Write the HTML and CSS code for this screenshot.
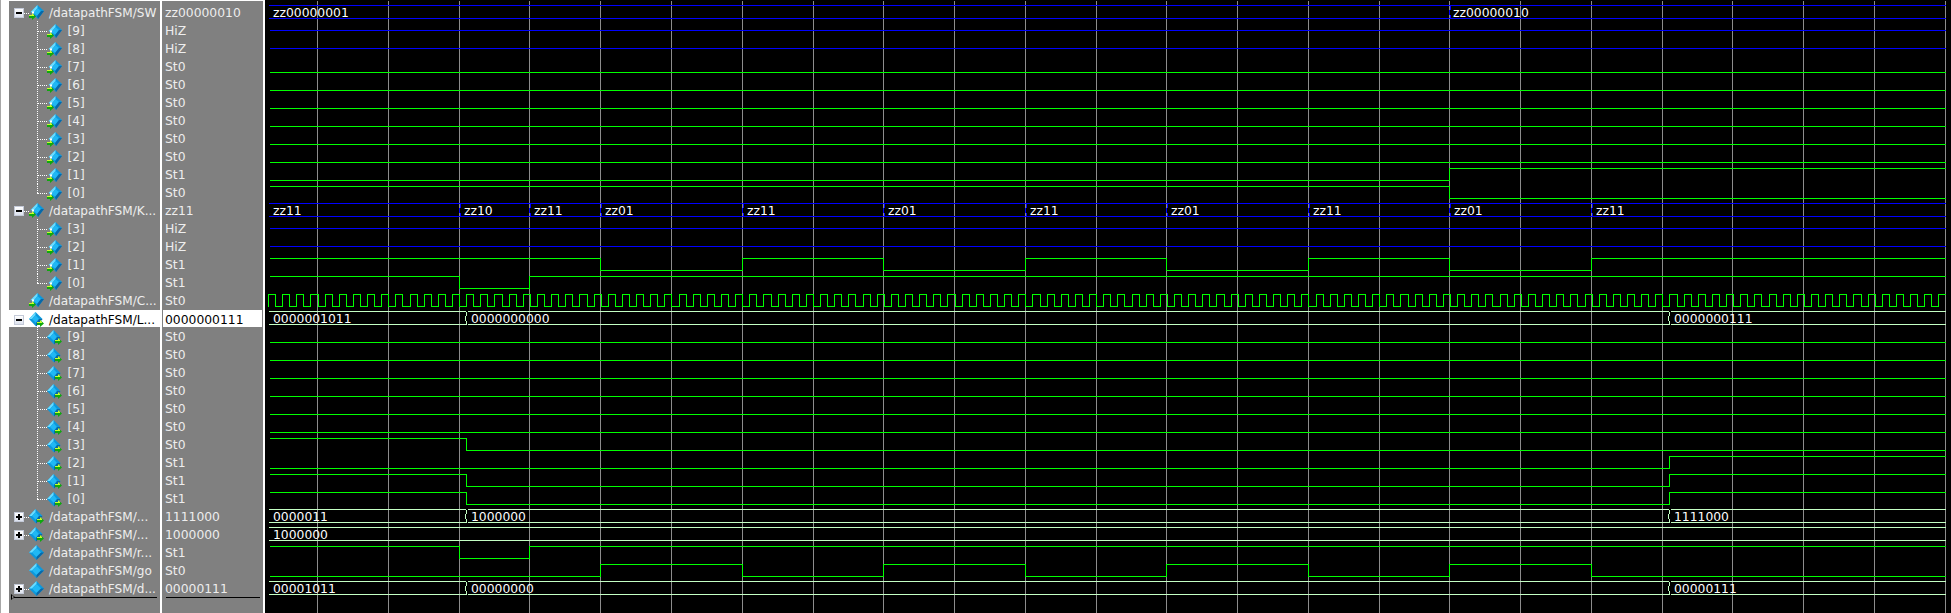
FILE: index.html
```html
<!DOCTYPE html>
<html lang="en">
<head>
  <meta charset="UTF-8">
  <title>Wave - datapathFSM</title>
  <link rel="stylesheet" href="styles.css">
</head>
<body>
  <!-- icon shapes, used by every row -->
  <svg class="defs" width="0" height="0">
    <symbol id="diamond" viewBox="0 0 15 15">
      <polygon points="7.5,0 15,7.5 7.5,15 0,7.5" fill="#0c98dc"/>
      <polygon points="7.5,0 0,7.5 3,7.5 7.5,3" fill="#6cdcff"/>
      <polygon points="7.5,3 12,7.5 7.5,12 3,7.5" fill="#20b8f4"/>
      <polygon points="15,7.5 7.5,15 7.5,12 12,7.5" fill="#0868a8"/>
    </symbol>
    <symbol id="ic-in" viewBox="0 0 15 15">
      <polygon points="8.5,0 15,6 9,14 2,7" fill="#0c98dc"/>
      <polygon points="8.5,0 1.5,7 4.5,8 8.5,3" fill="#6cdcff"/>
      <polygon points="8.5,3 12,6 8.5,11 4.5,8" fill="#20b8f4"/>
      <polygon points="15,6 9,14 8,11 12,6" fill="#0868a8"/>
      <polygon points="0,10 3,10 3,8 7,11.5 3,15 3,13 0,13" fill="#0ea80e"/>
      <polygon points="0,10 3,10 3,8 5,10 5,11 0,11" fill="#c8ff30"/>
      <rect x="3" y="6.5" width="2" height="2" fill="#fff"/>
    </symbol>
    <symbol id="ic-out" viewBox="0 0 15 15">
      <polygon points="6.5,0 13.5,7 7,14.5 0,7" fill="#0c98dc"/>
      <polygon points="6.5,0 0,7 3,7 6.5,3" fill="#6cdcff"/>
      <polygon points="6.5,3 10,7 7,11 3,7" fill="#20b8f4"/>
      <polygon points="13.5,7 7,14.5 7,11 10,7" fill="#0868a8"/>
      <polygon points="8,10 11,10 11,8 15,11.5 11,15 11,13 8,13" fill="#0ea80e"/>
      <polygon points="8,10 11,10 11,8 13,10 13,11 8,11" fill="#c8ff30"/>
    </symbol>
    <path id="xing" d="M1 0v4M0 4v5M1 9v4"/>
    <path id="clk5" d="M0 12V0h7.078v12h7.078v-12h7.078v12h7.078v-12h7.078v12h7.078v-12h7.078v12h7.078v-12h7.078v12h7.078"/>
    <g id="clk25">
      <use href="#clk5"/>
      <use href="#clk5" x="70.78"/>
      <use href="#clk5" x="141.56"/>
      <use href="#clk5" x="212.34"/>
      <use href="#clk5" x="283.12"/>
    </g>
  </svg>

  <div class="wave-window">
    <!-- signal names -->
    <div class="pane names">
      <div class="row"><i class="tog"></i><i class="stub"></i><svg class="icon"><use href="#ic-in"/></svg><span>/datapathFSM/SW</span></div>
      <div class="row child"><i class="branch"></i><svg class="icon"><use href="#ic-in"/></svg><span>[9]</span></div>
      <div class="row child"><i class="branch"></i><svg class="icon"><use href="#ic-in"/></svg><span>[8]</span></div>
      <div class="row child"><i class="branch"></i><svg class="icon"><use href="#ic-in"/></svg><span>[7]</span></div>
      <div class="row child"><i class="branch"></i><svg class="icon"><use href="#ic-in"/></svg><span>[6]</span></div>
      <div class="row child"><i class="branch"></i><svg class="icon"><use href="#ic-in"/></svg><span>[5]</span></div>
      <div class="row child"><i class="branch"></i><svg class="icon"><use href="#ic-in"/></svg><span>[4]</span></div>
      <div class="row child"><i class="branch"></i><svg class="icon"><use href="#ic-in"/></svg><span>[3]</span></div>
      <div class="row child"><i class="branch"></i><svg class="icon"><use href="#ic-in"/></svg><span>[2]</span></div>
      <div class="row child"><i class="branch"></i><svg class="icon"><use href="#ic-in"/></svg><span>[1]</span></div>
      <div class="row child last"><i class="branch"></i><svg class="icon"><use href="#ic-in"/></svg><span>[0]</span></div>

      <div class="row"><i class="tog"></i><i class="stub"></i><svg class="icon"><use href="#ic-in"/></svg><span>/datapathFSM/K...</span></div>
      <div class="row child"><i class="branch"></i><svg class="icon"><use href="#ic-in"/></svg><span>[3]</span></div>
      <div class="row child"><i class="branch"></i><svg class="icon"><use href="#ic-in"/></svg><span>[2]</span></div>
      <div class="row child"><i class="branch"></i><svg class="icon"><use href="#ic-in"/></svg><span>[1]</span></div>
      <div class="row child last"><i class="branch"></i><svg class="icon"><use href="#ic-in"/></svg><span>[0]</span></div>

      <div class="row leaf"><svg class="icon"><use href="#ic-in"/></svg><span>/datapathFSM/C...</span></div>

      <div class="row selected"><i class="tog"></i><i class="stub"></i><svg class="icon"><use href="#ic-out"/></svg><span>/datapathFSM/L...</span></div>
      <div class="row child"><i class="branch"></i><svg class="icon"><use href="#ic-out"/></svg><span>[9]</span></div>
      <div class="row child"><i class="branch"></i><svg class="icon"><use href="#ic-out"/></svg><span>[8]</span></div>
      <div class="row child"><i class="branch"></i><svg class="icon"><use href="#ic-out"/></svg><span>[7]</span></div>
      <div class="row child"><i class="branch"></i><svg class="icon"><use href="#ic-out"/></svg><span>[6]</span></div>
      <div class="row child"><i class="branch"></i><svg class="icon"><use href="#ic-out"/></svg><span>[5]</span></div>
      <div class="row child"><i class="branch"></i><svg class="icon"><use href="#ic-out"/></svg><span>[4]</span></div>
      <div class="row child"><i class="branch"></i><svg class="icon"><use href="#ic-out"/></svg><span>[3]</span></div>
      <div class="row child"><i class="branch"></i><svg class="icon"><use href="#ic-out"/></svg><span>[2]</span></div>
      <div class="row child"><i class="branch"></i><svg class="icon"><use href="#ic-out"/></svg><span>[1]</span></div>
      <div class="row child last"><i class="branch"></i><svg class="icon"><use href="#ic-out"/></svg><span>[0]</span></div>

      <div class="row"><i class="tog closed"></i><i class="stub"></i><svg class="icon"><use href="#ic-out"/></svg><span>/datapathFSM/...</span></div>
      <div class="row"><i class="tog closed"></i><i class="stub"></i><svg class="icon"><use href="#ic-out"/></svg><span>/datapathFSM/...</span></div>
      <div class="row leaf"><svg class="icon"><use href="#diamond"/></svg><span>/datapathFSM/r...</span></div>
      <div class="row leaf"><svg class="icon"><use href="#diamond"/></svg><span>/datapathFSM/go</span></div>
      <div class="row"><i class="tog closed"></i><i class="stub"></i><svg class="icon"><use href="#diamond"/></svg><span>/datapathFSM/d...</span></div>
      <div class="drop-line"></div>
    </div>

    <!-- values at the cursor -->
    <div class="pane values">
      <div class="row">zz00000010</div>
      <div class="row">HiZ</div>
      <div class="row">HiZ</div>
      <div class="row">St0</div>
      <div class="row">St0</div>
      <div class="row">St0</div>
      <div class="row">St0</div>
      <div class="row">St0</div>
      <div class="row">St0</div>
      <div class="row">St1</div>
      <div class="row">St0</div>
      <div class="row">zz11</div>
      <div class="row">HiZ</div>
      <div class="row">HiZ</div>
      <div class="row">St1</div>
      <div class="row">St1</div>
      <div class="row">St0</div>
      <div class="row selected">0000000111</div>
      <div class="row">St0</div>
      <div class="row">St0</div>
      <div class="row">St0</div>
      <div class="row">St0</div>
      <div class="row">St0</div>
      <div class="row">St0</div>
      <div class="row">St0</div>
      <div class="row">St1</div>
      <div class="row">St1</div>
      <div class="row">St1</div>
      <div class="row">1111000</div>
      <div class="row">1000000</div>
      <div class="row">St1</div>
      <div class="row">St0</div>
      <div class="row">00000111</div>
      <div class="drop-line"></div>
    </div>

    <!-- waveforms: coordinates are page pixels, hence the viewBox -->
    <svg class="waves" viewBox="265 0 1686 613" shape-rendering="crispEdges">
      <g transform="translate(0.5 0.5)">
        <path class="grid" d="M317 0V613M388 0V613M459 0V613M529 0V613M600 0V613M671 0V613M742 0V613M813 0V613M883 0V613M954 0V613M1025 0V613M1096 0V613M1166 0V613M1237 0V613M1308 0V613M1379 0V613M1449 0V613M1520 0V613M1591 0V613M1662 0V613M1732 0V613M1803 0V613M1874 0V613M1945 0V613"/>

        <!-- SW -->
        <g class="hiz">
          <path d="M268 5H1945M268 18H1945"/>
          <use href="#xing" x="1449" y="5"/>
          <path d="M269 30H1945M269 48H1945"/>
        </g>
        <path class="bit" d="M269 72H1945M269 90H1945M269 108H1945M269 126H1945M269 144H1945M269 162H1945"/>
        <path class="bit" d="M269 180H1449V168H1945"/>
        <path class="bit" d="M269 186H1449V198H1945"/>

        <!-- KEY -->
        <g class="hiz">
          <path d="M268 203H1945M268 216H1945"/>
          <use href="#xing" x="459" y="203"/>
          <use href="#xing" x="529" y="203"/>
          <use href="#xing" x="600" y="203"/>
          <use href="#xing" x="742" y="203"/>
          <use href="#xing" x="883" y="203"/>
          <use href="#xing" x="1025" y="203"/>
          <use href="#xing" x="1166" y="203"/>
          <use href="#xing" x="1308" y="203"/>
          <use href="#xing" x="1449" y="203"/>
          <use href="#xing" x="1591" y="203"/>
          <path d="M269 228H1945M269 246H1945"/>
        </g>
        <path class="bit" d="M269 258H600V270H742V258H883V270H1025V258H1166V270H1308V258H1449V270H1591V258H1945"/>
        <path class="bit" d="M269 276H459V288H529V276H1945"/>

        <!-- CLK, 118 and a bit periods -->
        <g class="bit" transform="translate(268 294)">
          <use href="#clk25"/>
          <use href="#clk25" x="353.9"/>
          <use href="#clk25" x="707.8"/>
          <use href="#clk25" x="1061.7"/>
          <use href="#clk5" x="1415.6"/>
          <use href="#clk5" x="1486.38"/>
          <use href="#clk5" x="1557.16"/>
          <path d="M1627.94 12V0h7.078v12h7.078v-12h7.078v12h7.078v-12h7.078v12h7.078v-12h6.6"/>
        </g>

        <!-- L -->
        <g class="bus">
          <path d="M268 311H465M467 311H1668M1670 311H1945M268 324H465M467 324H1668M1670 324H1945"/>
          <use href="#xing" x="465" y="311"/>
          <use href="#xing" x="1668" y="311"/>
        </g>
        <path class="bit" d="M269 342H1945M269 360H1945M269 378H1945M269 396H1945M269 414H1945M269 432H1945"/>
        <path class="bit" d="M269 438H466V450H1945"/>
        <path class="bit" d="M269 468H1669V456H1945"/>
        <path class="bit" d="M269 474H466V486H1669V474H1945"/>
        <path class="bit" d="M269 492H466V504H1669V492H1945"/>

        <g class="bus">
          <path d="M268 509H465M467 509H1668M1670 509H1945M268 522H465M467 522H1668M1670 522H1945"/>
          <use href="#xing" x="465" y="509"/>
          <use href="#xing" x="1668" y="509"/>
          <path d="M268 527H1945M268 540H1945"/>
        </g>
        <path class="bit" d="M269 546H459V558H529V546H1945"/>
        <path class="bit" d="M269 576H600V564H742V576H883V564H1025V576H1166V564H1308V576H1449V564H1591V576H1945"/>
        <g class="bus">
          <path d="M268 581H465M467 581H1668M1670 581H1945M268 594H465M467 594H1668M1670 594H1945"/>
          <use href="#xing" x="465" y="581"/>
          <use href="#xing" x="1668" y="581"/>
        </g>
      </g>

      <g class="bus-text">
        <text x="273" y="17">zz00000001</text>
        <text x="1453" y="17">zz00000010</text>
        <text x="273" y="215">zz11</text>
        <text x="464" y="215">zz10</text>
        <text x="534" y="215">zz11</text>
        <text x="605" y="215">zz01</text>
        <text x="747" y="215">zz11</text>
        <text x="888" y="215">zz01</text>
        <text x="1030" y="215">zz11</text>
        <text x="1171" y="215">zz01</text>
        <text x="1313" y="215">zz11</text>
        <text x="1454" y="215">zz01</text>
        <text x="1596" y="215">zz11</text>
        <text x="273" y="323">0000001011</text>
        <text x="471" y="323">0000000000</text>
        <text x="1674" y="323">0000000111</text>
        <text x="273" y="521">0000011</text>
        <text x="471" y="521">1000000</text>
        <text x="1674" y="521">1111000</text>
        <text x="273" y="539">1000000</text>
        <text x="273" y="593">00001011</text>
        <text x="471" y="593">00000000</text>
        <text x="1674" y="593">00000111</text>
      </g>
    </svg>
  </div>
</body>
</html>
```

FILE: styles.css
```css
html, body {
  margin: 0;
  height: 100%;
  overflow: hidden;
  background-color: #fff;
}

.defs {
  position: absolute;
}

.wave-window {
  display: flex;
  height: 613px;
  padding: 1px 0 0 8px;
  box-sizing: border-box;
  border-left: 1px solid #a8a8a8;
  font-family: "DejaVu Sans", sans-serif;
  font-size: 12.35px;
}

.pane {
  padding-top: 2px;
  background-color: #808080;
  color: #eee;
}

.names {
  width: 151px;
  margin-right: 2px;
  font-size: 12.1px;
}

.names span {
  padding-top: 2px;
}

.values {
  width: 101px;
  margin-right: 2px;
}

.row {
  display: flex;
  align-items: center;
  position: relative;
  box-sizing: border-box;
  height: 18px;
  white-space: nowrap;
}

.names .row {
  padding-left: 5px;
}

.names .row.leaf {
  padding-left: 20px;
}

.names .row.child {
  padding-left: 28px;
}

.values .row {
  padding: 2px 0 0 2px;
  margin-left: 1px;
  margin-right: 1px;
}

.row.selected {
  border-top: 1px solid #808080;
  background-color: #fff;
  background-clip: padding-box;
  color: #000;
}

.icon {
  flex: none;
  width: 15px;
  height: 15px;
  margin: 1px 5px 0 0;
}

.child .icon {
  margin-top: 2px;
  margin-right: 5.5px;
}

/* expand / collapse box */
.tog {
  position: relative;
  flex: none;
  box-sizing: border-box;
  width: 10px;
  height: 10px;
  margin-top: 2px;
  border: 1px solid #c4cad8;
  background: linear-gradient(#fff, #dde2ee);
}

.tog::before {
  content: "";
  position: absolute;
  left: 1px;
  top: 3px;
  width: 6px;
  height: 2px;
  background-color: #000;
}

.tog.closed::after {
  content: "";
  position: absolute;
  left: 3px;
  top: 1px;
  width: 2px;
  height: 6px;
  background-color: #000;
}

.stub {
  flex: none;
  width: 5px;
  margin-top: 2px;
  border-top: 1px dotted #fff;
}

.branch {
  position: relative;
  flex: none;
  width: 10px;
  margin-top: 2px;
  border-top: 1px dotted #fff;
}

.branch::before {
  content: "";
  position: absolute;
  left: 0;
  top: -11px;
  height: 19px;
  border-left: 1px dotted #fff;
}

.last .branch::before {
  height: 10px;
}

/* drop marker under the last row */
.drop-line {
  position: relative;
  height: 1px;
  margin: 0 3px 0 4px;
  background-color: #000;
}

.names .drop-line::before,
.names .drop-line::after {
  content: "";
  position: absolute;
  top: -3px;
  border-left: 4px solid #000;
  border-top: 3px solid transparent;
  border-bottom: 3px solid transparent;
}

.names .drop-line::before {
  left: -2px;
}

.names .drop-line::after {
  left: -1px;
  top: -2px;
  border-left: 2px solid #808080;
  border-top-width: 2px;
  border-bottom-width: 2px;
}

.waves {
  flex: 1;
  height: 613px;
  margin-top: -1px;
  background-color: #000;
}

.waves path, .waves use {
  fill: none;
}

.grid {
  stroke: #8c8c8c;
}

.hiz {
  stroke: #0000ff;
}

.bit {
  stroke: #00ff00;
}

.bus {
  stroke: #c4ffc4;
}

.bus-text {
  fill: #fff;
  font-size: 12.35px;
}
```
